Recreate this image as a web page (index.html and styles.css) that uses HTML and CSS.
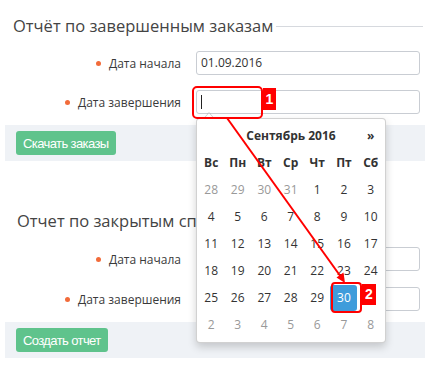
FILE: index.html
```html
<!DOCTYPE html>
<html lang="ru">
<head>
    <meta charset="UTF-8">
    <meta name="viewport" content="width=device-width, initial-scale=1.0">
    <title>Отчёты</title>
    <link rel="stylesheet" href="styles.css">
</head>
<body>
<div class="page">

    <div class="section">
        <div class="legend"><span>Отчёт по завершенным заказам</span><i class="rule"></i></div>
        <div class="rows">
            <div class="label"><i class="dot"></i>Дата начала</div>
            <div class="input">01.09.2016</div>
            <div class="label"><i class="dot"></i>Дата завершения</div>
            <div class="input"><i class="caret-text"></i></div>
        </div>
        <div class="actions"><button class="btn">Скачать заказы</button></div>
    </div>

    <div class="section section-second">
        <div class="legend legend-second"><span>Отчет по закрытым спи</span></div>
        <div class="rows">
            <div class="label"><i class="dot"></i>Дата начала</div>
            <div class="input"></div>
            <div class="label"><i class="dot"></i>Дата завершения</div>
            <div class="input"></div>
        </div>
        <div class="actions"><button class="btn">Создать отчет</button></div>
    </div>

    <div class="datepicker">
        <table>
            <tr class="head">
                <th></th>
                <th colspan="5">Сентябрь 2016</th>
                <th>»</th>
            </tr>
            <tr class="dow">
                <th>Вс</th><th>Пн</th><th>Вт</th><th>Ср</th><th>Чт</th><th>Пт</th><th>Сб</th>
            </tr>
            <tr><td class="old">28</td><td class="old">29</td><td class="old">30</td><td class="old">31</td><td>1</td><td>2</td><td>3</td></tr>
            <tr><td>4</td><td>5</td><td>6</td><td>7</td><td>8</td><td>9</td><td>10</td></tr>
            <tr><td>11</td><td>12</td><td>13</td><td>14</td><td>15</td><td>16</td><td>17</td></tr>
            <tr><td>18</td><td>19</td><td>20</td><td>21</td><td>22</td><td>23</td><td>24</td></tr>
            <tr><td>25</td><td>26</td><td>27</td><td>28</td><td>29</td><td><span class="active">30</span></td><td></td></tr>
            <tr><td class="old">2</td><td class="old">3</td><td class="old">4</td><td class="old">5</td><td class="old">6</td><td class="old">7</td><td class="old">8</td></tr>
        </table>
    </div>

    <svg class="arrow" width="432" height="366" viewBox="0 0 432 366">
        <line x1="227" y1="118" x2="341" y2="277" stroke="#f00" stroke-width="2"/>
        <polygon points="345,283 336.5,277.5 343.5,272.5" fill="#f00"/>
    </svg>

    <div class="mark mark-one"></div>
    <div class="tag tag-one">1</div>
    <div class="mark mark-two"></div>
    <div class="tag tag-two">2</div>

</div>
</body>
</html>
```

FILE: styles.css
```css
body {
    margin: 0;
    font-family: "Open Sans", sans-serif;
    color: #333;
    background: #fff;
}
.page {
    position: relative;
    width: 432px;
    height: 366px;
    padding: 0 7px 0 5px;
    box-sizing: border-box;
    overflow: hidden;
}
.legend {
    display: flex;
    align-items: center;
    gap: 3px;
    margin-top: 16px;
    padding-left: 8px;
    font-size: 16.5px;
    line-height: 20px;
    color: #444;
}
.legend-second {
    margin-top: 50px;
    padding-left: 12px;
}
.rule {
    flex: 1;
    border-top: 1px solid #d6d9de;
    margin-right: 2px;
}
.rows {
    display: grid;
    grid-template-columns: 191px 1fr;
    row-gap: 15px;
    margin-top: 15px;
    align-items: center;
}
.section-second .rows {
    margin-top: 16px;
    row-gap: 16px;
}
.label {
    display: flex;
    justify-content: flex-end;
    align-items: center;
    gap: 8px;
    padding-right: 15px;
    font-size: 12px;
    color: #3a3a3a;
}
.dot {
    width: 5px;
    height: 5px;
    border-radius: 50%;
    background: #f26b3a;
}
.input {
    height: 24px;
    margin-right: 5px;
    border: 1px solid #c9cdd3;
    border-radius: 3px;
    box-sizing: border-box;
    padding: 0 4px;
    font-size: 12px;
    line-height: 22px;
    color: #333;
    display: flex;
    align-items: center;
}
.caret-text {
    width: 1px;
    height: 14px;
    background: #222;
}
.actions {
    margin-top: 11px;
    padding: 6px 11px;
    background: #eff2f6;
}
.btn {
    display: block;
    height: 24px;
    padding: 0 7px;
    border: 0;
    border-radius: 3px;
    background: #5fc38c;
    color: #fff;
    font-family: "Liberation Sans", sans-serif;
    font-size: 13px;
    letter-spacing: -0.6px;
}
.datepicker {
    position: absolute;
    left: 196px;
    top: 118px;
    width: 190px;
    padding: 3px 1px 4px;
    box-sizing: border-box;
    background: #fff;
    border: 1px solid rgba(0, 0, 0, 0.18);
    border-radius: 4px;
    box-shadow: 0 4px 8px rgba(0, 0, 0, 0.18);
}
.datepicker::before,
.datepicker::after {
    content: "";
    position: absolute;
    left: 6px;
    border-left: 6px solid transparent;
    border-right: 6px solid transparent;
}
.datepicker::before {
    top: -7px;
    border-bottom: 7px solid rgba(0, 0, 0, 0.2);
}
.datepicker::after {
    top: -6px;
    left: 7px;
    border-left-width: 5px;
    border-right-width: 5px;
    border-bottom: 6px solid #fff;
}
.datepicker table {
    border-collapse: collapse;
}
.datepicker th,
.datepicker td {
    width: 27px;
    height: 27px;
    padding: 0;
    text-align: center;
    font-size: 12px;
}
.datepicker th {
    font-weight: 700;
}
.datepicker td {
    color: #333;
}
.datepicker td.old {
    color: #999;
}
.active {
    display: flex;
    align-items: center;
    justify-content: center;
    width: 27px;
    height: 26px;
    border-radius: 3px;
    background: #3f9cdb;
    color: #fff;
}
.arrow {
    position: absolute;
    left: 0;
    top: 0;
    pointer-events: none;
}
.mark {
    position: absolute;
    border: 2px solid #f00;
    border-radius: 5px;
    box-sizing: border-box;
}
.mark-one {
    left: 192px;
    top: 86px;
    width: 71px;
    height: 33px;
}
.mark-two {
    left: 331px;
    top: 282px;
    width: 31px;
    height: 31px;
    border-radius: 4px;
}
.tag {
    position: absolute;
    background: #f00;
    color: #fff;
    font-family: "Liberation Sans", sans-serif;
    font-size: 14px;
    font-weight: 700;
    text-align: center;
    line-height: 22px;
}
.tag-one {
    left: 263px;
    top: 88px;
    width: 13px;
    height: 22px;
}
.tag-two {
    left: 362px;
    top: 284px;
    width: 14px;
    height: 21px;
    line-height: 20px;
}
```
